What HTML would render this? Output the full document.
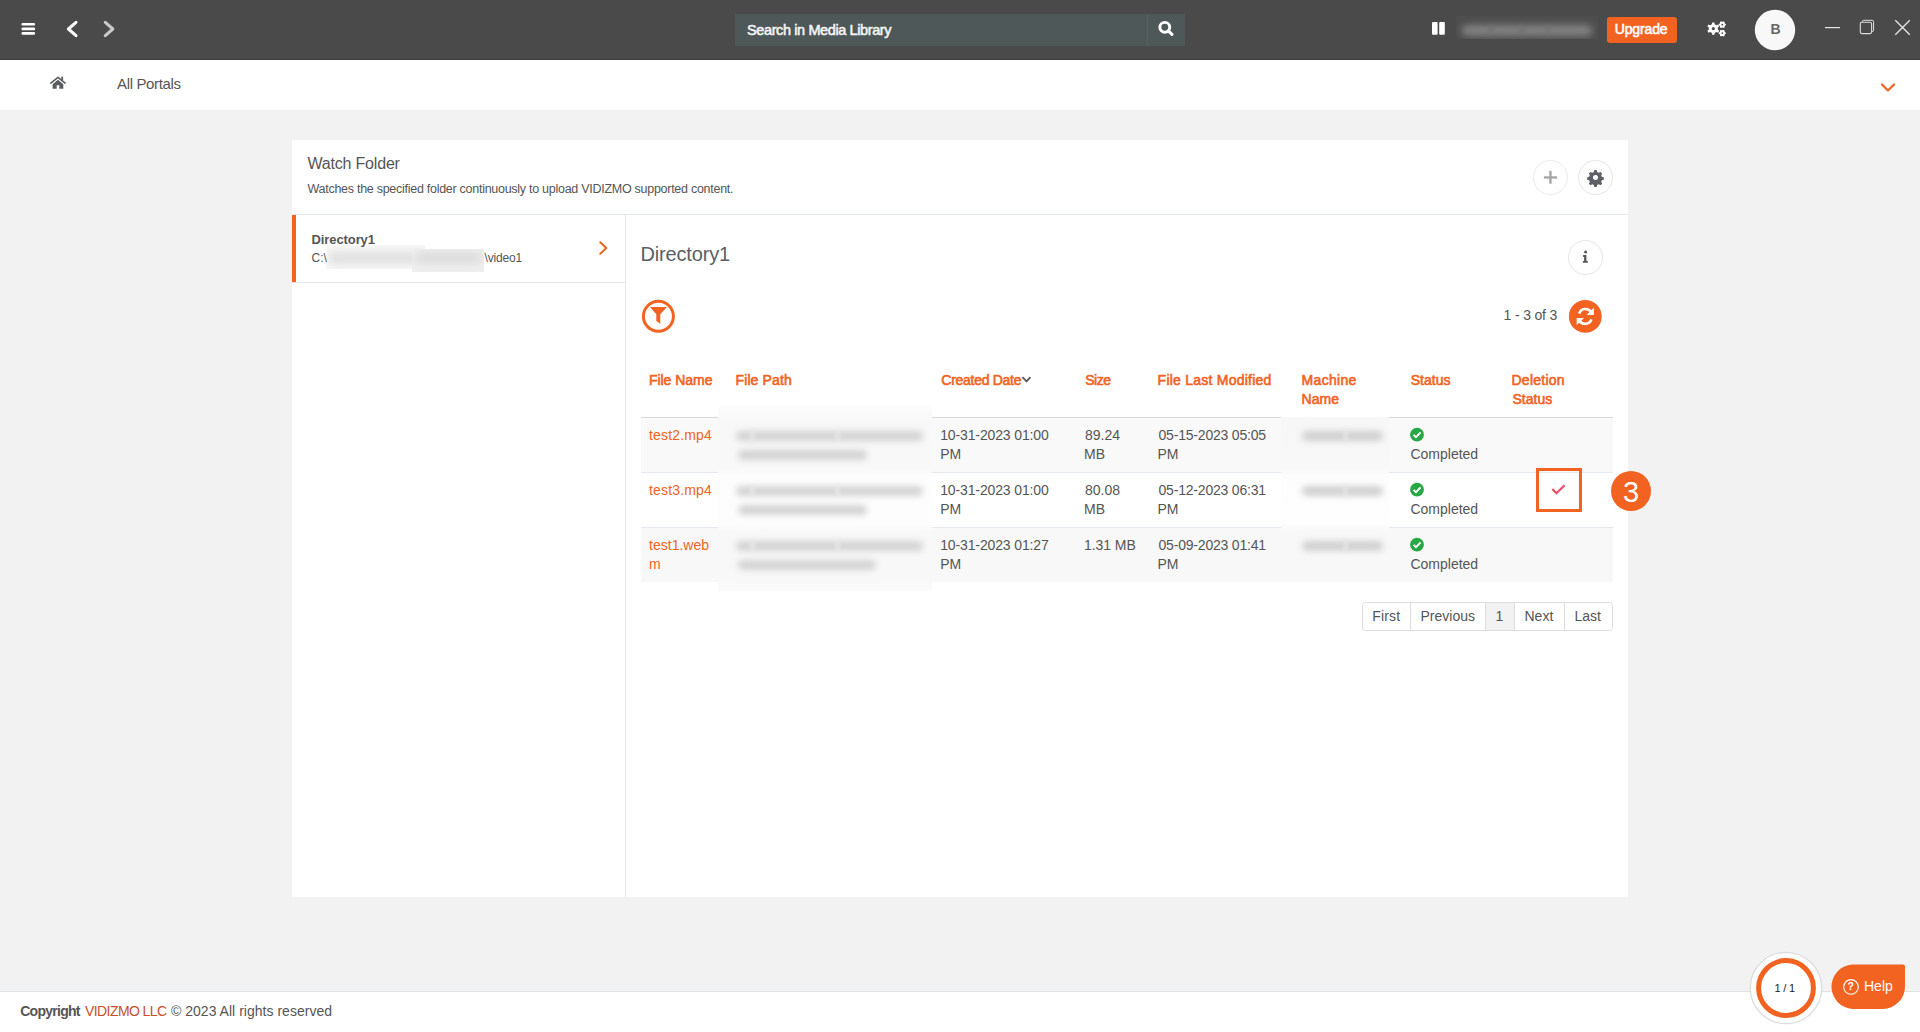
<!DOCTYPE html>
<html><head><meta charset="utf-8"><title>Watch Folder</title>
<style>
html,body{margin:0;padding:0;}
body{width:1920px;height:1032px;overflow:hidden;background:#f2f2f2;position:relative;font-family:"Liberation Sans",sans-serif;}
.a{position:absolute;box-sizing:border-box;}
.t{position:absolute;z-index:5;white-space:pre;font-family:"Liberation Sans",sans-serif;}
svg{position:absolute;overflow:visible;}
.blur{position:absolute;filter:blur(3px);}
</style></head><body>

<!-- top bar -->
<div class="a" style="left:0;top:0;width:1920px;height:60px;background:#4a4a4a;box-shadow:inset 0 -1px 0 #3c3c3c;z-index:2"></div>
<svg style="left:0;top:0;z-index:3" width="1920" height="60">
  <!-- hamburger -->
  <g fill="#ffffff">
    <rect x="21.5" y="22.9" width="13.6" height="2.6" rx="1.2"/>
    <rect x="21.5" y="27.6" width="13.6" height="2.6" rx="1.2"/>
    <rect x="21.5" y="32.1" width="13.6" height="2.6" rx="1.2"/>
  </g>
  <polyline points="76,22.3 68.4,29 76,35.7" fill="none" stroke="#ffffff" stroke-width="3" stroke-linecap="round" stroke-linejoin="round"/>
  <polyline points="105.3,22.3 112.9,29 105.3,35.7" fill="none" stroke="#c9c9c9" stroke-width="3" stroke-linecap="round" stroke-linejoin="round"/>
  <!-- search -->
  <rect x="735" y="14" width="450" height="32" fill="#4f5858"/>
  <rect x="1147" y="14" width="1" height="32" fill="#566161"/>
  <circle cx="1164.8" cy="27.3" r="4.9" fill="none" stroke="#ffffff" stroke-width="2.9"/>
  <line x1="1168.4" y1="30.9" x2="1172" y2="34.4" stroke="#ffffff" stroke-width="3" stroke-linecap="round"/>
  <!-- pause -->
  <rect x="1432" y="22" width="5.6" height="12.8" rx="1" fill="#ffffff"/>
  <rect x="1439.2" y="22" width="5.6" height="12.8" rx="1" fill="#ffffff"/>
  <!-- upgrade -->
  <rect x="1607" y="17" width="70" height="26" rx="3" fill="#f26322"/>
  <!-- gears -->
  <path d="M1711.92,24.21 L1712.18,22.40 L1714.42,22.40 L1714.68,24.21 L1716.41,25.21 L1718.11,24.53 L1719.23,26.47 L1717.79,27.60 L1717.79,29.60 L1719.23,30.73 L1718.11,32.67 L1716.41,31.99 L1714.68,32.99 L1714.42,34.80 L1712.18,34.80 L1711.92,32.99 L1710.19,31.99 L1708.49,32.67 L1707.37,30.73 L1708.81,29.60 L1708.81,27.60 L1707.37,26.47 L1708.49,24.53 L1710.19,25.21 Z M1714.90,28.60 A1.6,1.6 0 1 0 1711.70,28.60 A1.6,1.6 0 1 0 1714.90,28.60 Z" fill="#ffffff" fill-rule="evenodd"/>
  <path d="M1725.05,23.79 L1725.83,24.01 L1725.83,25.39 L1725.05,25.61 L1724.47,26.63 L1724.67,27.41 L1723.47,28.11 L1722.89,27.54 L1721.71,27.54 L1721.13,28.11 L1719.93,27.41 L1720.13,26.63 L1719.55,25.61 L1718.77,25.39 L1718.77,24.01 L1719.55,23.79 L1720.13,22.77 L1719.93,21.99 L1721.13,21.29 L1721.71,21.86 L1722.89,21.86 L1723.47,21.29 L1724.67,21.99 L1724.47,22.77 Z M1723.20,24.70 A0.9,0.9 0 1 0 1721.40,24.70 A0.9,0.9 0 1 0 1723.20,24.70 Z" fill="#ffffff" fill-rule="evenodd"/>
  <path d="M1725.05,32.19 L1725.83,32.41 L1725.83,33.79 L1725.05,34.01 L1724.47,35.03 L1724.67,35.81 L1723.47,36.51 L1722.89,35.94 L1721.71,35.94 L1721.13,36.51 L1719.93,35.81 L1720.13,35.03 L1719.55,34.01 L1718.77,33.79 L1718.77,32.41 L1719.55,32.19 L1720.13,31.17 L1719.93,30.39 L1721.13,29.69 L1721.71,30.26 L1722.89,30.26 L1723.47,29.69 L1724.67,30.39 L1724.47,31.17 Z M1723.20,33.10 A0.9,0.9 0 1 0 1721.40,33.10 A0.9,0.9 0 1 0 1723.20,33.10 Z" fill="#ffffff" fill-rule="evenodd"/>
  <!-- avatar -->
  <circle cx="1775" cy="30" r="20.2" fill="#f8f8f8"/>
  <!-- window controls -->
  <rect x="1825" y="27" width="15" height="1.2" fill="#e6e6e6"/>
  <rect x="1862.3" y="20.3" width="11.3" height="11.3" rx="1.5" fill="none" stroke="#dcdcdc" stroke-width="1"/>
  <rect x="1860.3" y="22.3" width="11.3" height="11.3" rx="1.5" fill="#4a4a4a" stroke="#dcdcdc" stroke-width="1.1"/>
  <line x1="1895.3" y1="20.3" x2="1909.8" y2="34.8" stroke="#e6e6e6" stroke-width="1.3"/>
  <line x1="1909.8" y1="20.3" x2="1895.3" y2="34.8" stroke="#e6e6e6" stroke-width="1.3"/>
</svg>
<!-- blurred account text -->
<div class="a" style="left:1456px;top:16px;width:142px;height:23px;background:#4e4e4e;z-index:3;overflow:hidden">
  <div class="blur" style="left:6px;top:8.5px;width:130px;height:11px;background:#828282;border-radius:5px;filter:blur(3.5px)"></div>
  <div class="blur" style="left:33px;top:9px;width:4px;height:10px;background:#6e6e6e;filter:blur(2.5px)"></div>
  <div class="blur" style="left:64px;top:9px;width:4px;height:10px;background:#6e6e6e;filter:blur(2.5px)"></div>
  <div class="blur" style="left:90px;top:9px;width:4px;height:10px;background:#6e6e6e;filter:blur(2.5px)"></div>
</div>
<!-- breadcrumb -->
<div class="a" style="left:0;top:60px;width:1920px;height:50px;background:#ffffff;z-index:1"></div>
<svg style="left:0;top:60px;z-index:2" width="1920" height="50">
  <polyline points="50.8,23.1 58,17.3 65.1,23.1" fill="none" stroke="#5a5c60" stroke-width="1.6" stroke-linecap="round" stroke-linejoin="round"/>
  <rect x="61.3" y="16.6" width="1.8" height="4.2" fill="#5a5c60"/>
  <path d="M52.6,24.2 L58,19.8 L63.3,24.2 V28.8 H59.3 V25.2 H56.7 V28.8 H52.6 Z" fill="#5a5c60"/>
  <polyline points="1882,24.5 1888,30.5 1894,24.5" fill="none" stroke="#f26322" stroke-width="2.2" stroke-linecap="round" stroke-linejoin="round"/>
</svg>

<!-- card -->
<div class="a" style="left:292px;top:140px;width:1336px;height:757px;background:#ffffff"></div>
<div class="a" style="left:292px;top:214px;width:1336px;height:1px;background:#e3e7ea"></div>
<div class="a" style="left:625px;top:214px;width:1px;height:683px;background:#e3e7ea"></div>
<!-- left item -->
<div class="a" style="left:292px;top:215px;width:4px;height:67px;background:#f26322"></div>
<div class="a" style="left:292px;top:282px;width:333px;height:1px;background:#e3e7ea"></div>
<div class="a" style="left:326px;top:245px;width:99px;height:24px;background:#f7f7f7;overflow:hidden">
  <div class="blur" style="left:2px;top:7px;width:100px;height:12px;background:#dfdfdf;border-radius:6px;filter:blur(4.5px)"></div>
</div>
<div class="a" style="left:412px;top:249px;width:72px;height:23px;background:#efefef;overflow:hidden">
  <div class="blur" style="left:2px;top:3px;width:68px;height:12px;background:#dcdcdc;border-radius:6px;filter:blur(4.5px)"></div>
</div>
<svg style="left:0;top:0" width="1920" height="1032">
  <polyline points="600.3,242.3 606.3,248 600.3,253.7" fill="none" stroke="#f26322" stroke-width="2" stroke-linecap="round" stroke-linejoin="round"/>
  <!-- plus / gear / info circles -->
  <circle cx="1550.4" cy="177.5" r="17" fill="#ffffff" stroke="#e8eaec" stroke-width="1"/>
  <rect x="1543.9" y="176.3" width="13.2" height="2.3" fill="#a3a3a3"/>
  <rect x="1549.3" y="170.9" width="2.3" height="12.8" fill="#a3a3a3"/>
  <circle cx="1595.5" cy="177.5" r="17" fill="#ffffff" stroke="#e3e5e8" stroke-width="1"/>
  <path d="M1594.3,170 h2.4 l0.5,2 l1.5,0.8 l1.9,-0.9 l1.5,1.5 l-0.9,1.9 l0.7,1.5 l2,0.6 v2.3 l-2,0.6 l-0.7,1.5 l0.9,1.9 l-1.5,1.5 l-1.9,-0.9 l-1.5,0.8 l-0.5,2 h-2.4 l-0.5,-2 l-1.5,-0.8 l-1.9,0.9 l-1.5,-1.5 l0.9,-1.9 l-0.7,-1.5 l-2,-0.6 v-2.3 l2,-0.6 l0.7,-1.5 l-0.9,-1.9 l1.5,-1.5 l1.9,0.9 l1.5,-0.8 z M1595.5,174.9 a2.6,2.6 0 1 0 0.01,0 z" fill="#5f6166" fill-rule="evenodd"/>
  <circle cx="1585.5" cy="257.5" r="17" fill="#ffffff" stroke="#e3e5e8" stroke-width="1"/>
  <circle cx="1585.6" cy="252.1" r="1.5" fill="#555"/>
  <path d="M1583.1,255 h3.3 v6 h1.4 v1.8 h-4.9 v-1.8 h1.2 v-4.1 h-1 z" fill="#555"/>
  <!-- filter -->
  <circle cx="658.4" cy="316.3" r="15" fill="none" stroke="#f26322" stroke-width="3"/>
  <path d="M650,307 H667 L660.3,314.3 V323.8 L656.3,321 V314.3 Z" fill="#f26322"/>
  <!-- refresh -->
  <circle cx="1585.3" cy="316.4" r="16.4" fill="#f26322"/>
  <g fill="none" stroke="#ffffff" stroke-width="2.6">
    <path d="M1579.2,313.5 A6.6,6.6 0 0 1 1591.2,312.3"/>
    <path d="M1591.4,319.3 A6.6,6.6 0 0 1 1579.4,320.5"/>
  </g>
  <path d="M1593.9,307.6 V314.9 H1586.6 Z" fill="#ffffff"/>
  <path d="M1576.7,325.2 V317.9 H1584 Z" fill="#ffffff"/>
</svg>

<!-- table -->
<div class="a" style="left:641px;top:418px;width:972px;height:54px;background:#f9f9f9"></div>
<div class="a" style="left:641px;top:473px;width:972px;height:54px;background:#ffffff"></div>
<div class="a" style="left:641px;top:528px;width:972px;height:54px;background:#f8f8f8"></div>
<div class="a" style="left:641px;top:417px;width:972px;height:1px;background:#d9d9d9"></div>
<div class="a" style="left:641px;top:472px;width:972px;height:1px;background:#e4e8eb"></div>
<div class="a" style="left:641px;top:527px;width:972px;height:1px;background:#e4e8eb"></div>

<!-- blurred file path column -->
<div class="a" style="left:718px;top:406px;width:214px;height:185px;overflow:hidden;background:linear-gradient(#fcfcfc 0px,#f9f9f9 11px,#f8f8f8 14px,#f8f8f8 62px,#fdfdfd 70px,#fdfdfd 118px,#f8f8f8 126px,#f8f8f8 174px,#fbfbfb 185px)">
  <div class="blur" style="left:18px;top:25px;width:187px;height:10px;background:#d3d3d3;border-radius:5px;filter:blur(3px)"></div>
  <div class="blur" style="left:20px;top:43.5px;width:129px;height:10px;background:#d3d3d3;border-radius:5px;filter:blur(3px)"></div>
  <div class="blur" style="left:33px;top:25px;width:3px;height:10px;background:#eeeeee;filter:blur(2px)"></div>
  <div class="blur" style="left:118px;top:25px;width:3px;height:10px;background:#eeeeee;filter:blur(2px)"></div>
  <div class="blur" style="left:18px;top:80px;width:187px;height:10px;background:#d3d3d3;border-radius:5px;filter:blur(3px)"></div>
  <div class="blur" style="left:20px;top:98.5px;width:129px;height:10px;background:#d3d3d3;border-radius:5px;filter:blur(3px)"></div>
  <div class="blur" style="left:33px;top:80px;width:3px;height:10px;background:#eeeeee;filter:blur(2px)"></div>
  <div class="blur" style="left:118px;top:80px;width:3px;height:10px;background:#eeeeee;filter:blur(2px)"></div>
  <div class="blur" style="left:18px;top:135px;width:187px;height:10px;background:#d3d3d3;border-radius:5px;filter:blur(3px)"></div>
  <div class="blur" style="left:20px;top:153.5px;width:138px;height:10px;background:#d3d3d3;border-radius:5px;filter:blur(3px)"></div>
  <div class="blur" style="left:33px;top:135px;width:3px;height:10px;background:#eeeeee;filter:blur(2px)"></div>
  <div class="blur" style="left:118px;top:135px;width:3px;height:10px;background:#eeeeee;filter:blur(2px)"></div>
</div>
<!-- blurred machine name column -->
<div class="a" style="left:1281px;top:417px;width:108px;height:165px;overflow:hidden;background:linear-gradient(#f7f7f7 0px,#f8f8f8 51px,#fdfdfd 59px,#fefefe 106px,#f8f8f8 114px,#f8f8f8 165px)">
  <div class="blur" style="left:21px;top:13.5px;width:81px;height:10px;background:#d0d0d0;border-radius:5px;filter:blur(3px)"></div>
  <div class="blur" style="left:63px;top:13.5px;width:3px;height:10px;background:#ebebeb;filter:blur(2px)"></div>
  <div class="blur" style="left:21px;top:68.5px;width:81px;height:10px;background:#d0d0d0;border-radius:5px;filter:blur(3px)"></div>
  <div class="blur" style="left:63px;top:68.5px;width:3px;height:10px;background:#ebebeb;filter:blur(2px)"></div>
  <div class="blur" style="left:21px;top:123.5px;width:81px;height:10px;background:#d0d0d0;border-radius:5px;filter:blur(3px)"></div>
  <div class="blur" style="left:63px;top:123.5px;width:3px;height:10px;background:#ebebeb;filter:blur(2px)"></div>
</div>
<svg style="left:0;top:0" width="1920" height="1032">
  <!-- sort chevron -->
  <polyline points="1023,377.6 1026.5,381.3 1030,377.6" fill="none" stroke="#555" stroke-width="1.8" stroke-linecap="round" stroke-linejoin="round"/>
  <!-- status icons -->
  <g id="ok">
    <circle cx="1417" cy="434.7" r="6.9" fill="#28a745"/>
    <polyline points="1413.6,434.8 1416,437.2 1420.6,432.4" fill="none" stroke="#ffffff" stroke-width="1.9"/>
  </g>
  <use href="#ok" y="55"/>
  <use href="#ok" y="110"/>
  <!-- highlight box -->
  <rect x="1537.5" y="469.5" width="43" height="41" fill="none" stroke="#f26322" stroke-width="3"/>
  <polyline points="1552.3,489 1556.4,493.2 1564.6,485.2" fill="none" stroke="#e8506a" stroke-width="2.2"/>
  <circle cx="1631" cy="491" r="20" fill="#f26322"/>
  <!-- pagination -->
  <rect x="1362.5" y="602.5" width="250" height="28" rx="3" fill="#ffffff" stroke="#dddddd"/>
  <rect x="1485.5" y="603" width="29" height="27" fill="#f2f2f2"/>
  <rect x="1410" y="603" width="1" height="27" fill="#dddddd"/>
  <rect x="1485" y="603" width="1" height="27" fill="#dddddd"/>
  <rect x="1514" y="603" width="1" height="27" fill="#dddddd"/>
  <rect x="1564" y="603" width="1" height="27" fill="#dddddd"/>
</svg>

<!-- footer -->
<div class="a" style="left:0;top:991px;width:1920px;height:41px;background:#ffffff;border-top:1px solid #e0e4e6"></div>
<svg style="left:0;top:0" width="1920" height="1032">
  <circle cx="1786" cy="988" r="35.7" fill="#ffffff" stroke="#d9dcde" stroke-width="1.2"/>
  <circle cx="1786" cy="988" r="27.4" fill="none" stroke="#f26322" stroke-width="5"/>
  <path d="M1852,964.4 H1903 Q1905,964.4 1905,966.4 V986.6 A22.3,22.3 0 0 1 1882.7,1008.9 H1852.3 A22.3,22.3 0 0 1 1852.3,964.4 Z" fill="#f26322"/>
  <circle cx="1851" cy="986.9" r="7.3" fill="none" stroke="#ffffff" stroke-width="1.1"/>
</svg>
<span class="t" style="left:1847.6px;top:981px;font-size:10.5px;line-height:10.5px;font-weight:bold;color:#fff">?</span>

<span class="t" style="left:747.00px;top:22.75px;font-size:14.5px;line-height:14.5px;font-weight:normal;color:#f4f4f4;letter-spacing:-0.390px;-webkit-text-stroke:0.55px #f4f4f4">Search in Media Library</span>
<span class="t" style="left:1614.70px;top:22.20px;font-size:14px;line-height:14px;font-weight:normal;color:#ffffff;letter-spacing:-0.136px;-webkit-text-stroke:0.55px #ffffff">Upgrade</span>
<span class="t" style="left:1770.50px;top:22.00px;font-size:14px;line-height:14px;font-weight:bold;color:#666666;letter-spacing:0.000px;">B</span>
<span class="t" style="left:117.00px;top:75.70px;font-size:15px;line-height:15px;font-weight:normal;color:#555555;letter-spacing:-0.352px;">All Portals</span>
<span class="t" style="left:307.50px;top:156.00px;font-size:16px;line-height:16px;font-weight:normal;color:#555555;letter-spacing:-0.193px;">Watch Folder</span>
<span class="t" style="left:307.50px;top:182.65px;font-size:12.5px;line-height:12.5px;font-weight:normal;color:#555555;letter-spacing:-0.273px;">Watches the specified folder continuously to upload VIDIZMO supported content.</span>
<span class="t" style="left:311.50px;top:232.75px;font-size:13px;line-height:13px;font-weight:bold;color:#555555;letter-spacing:-0.092px;">Directory1</span>
<span class="t" style="left:311.50px;top:251.90px;font-size:12px;line-height:12px;font-weight:normal;color:#555555;letter-spacing:0.000px;">C:\</span>
<span class="t" style="left:484.50px;top:251.90px;font-size:12px;line-height:12px;font-weight:normal;color:#555555;letter-spacing:-0.170px;">\video1</span>
<span class="t" style="left:640.50px;top:243.90px;font-size:20px;line-height:20px;font-weight:normal;color:#5a5f66;letter-spacing:-0.168px;">Directory1</span>
<span class="t" style="left:1503.60px;top:308.00px;font-size:14px;line-height:14px;font-weight:normal;color:#555555;letter-spacing:-0.174px;">1 - 3 of 3</span>
<span class="t" style="left:648.90px;top:372.90px;font-size:14px;line-height:14px;font-weight:normal;color:#f26322;letter-spacing:-0.026px;-webkit-text-stroke:0.6px #f26322">File Name</span>
<span class="t" style="left:735.50px;top:372.90px;font-size:14px;line-height:14px;font-weight:normal;color:#f26322;letter-spacing:0.117px;-webkit-text-stroke:0.6px #f26322">File Path</span>
<span class="t" style="left:941.30px;top:372.90px;font-size:14px;line-height:14px;font-weight:normal;color:#f26322;letter-spacing:-0.280px;-webkit-text-stroke:0.6px #f26322">Created Date</span>
<span class="t" style="left:1085.20px;top:372.90px;font-size:14px;line-height:14px;font-weight:normal;color:#f26322;letter-spacing:-0.483px;-webkit-text-stroke:0.6px #f26322">Size</span>
<span class="t" style="left:1157.60px;top:372.90px;font-size:14px;line-height:14px;font-weight:normal;color:#f26322;letter-spacing:0.239px;-webkit-text-stroke:0.6px #f26322">File Last Modified</span>
<span class="t" style="left:1301.60px;top:372.90px;font-size:14px;line-height:14px;font-weight:normal;color:#f26322;letter-spacing:0.312px;-webkit-text-stroke:0.6px #f26322">Machine</span>
<span class="t" style="left:1301.60px;top:391.70px;font-size:14px;line-height:14px;font-weight:normal;color:#f26322;letter-spacing:0.000px;-webkit-text-stroke:0.6px #f26322">Name</span>
<span class="t" style="left:1410.70px;top:372.90px;font-size:14px;line-height:14px;font-weight:normal;color:#f26322;letter-spacing:0.022px;-webkit-text-stroke:0.6px #f26322">Status</span>
<span class="t" style="left:1511.50px;top:372.90px;font-size:14px;line-height:14px;font-weight:normal;color:#f26322;letter-spacing:0.246px;-webkit-text-stroke:0.6px #f26322">Deletion</span>
<span class="t" style="left:1512.50px;top:391.70px;font-size:14px;line-height:14px;font-weight:normal;color:#f26322;letter-spacing:0.022px;-webkit-text-stroke:0.6px #f26322">Status</span>
<span class="t" style="left:649.10px;top:427.80px;font-size:14px;line-height:14px;font-weight:normal;color:#f26322;letter-spacing:0.139px;">test2.mp4</span>
<span class="t" style="left:940.20px;top:427.80px;font-size:14px;line-height:14px;font-weight:normal;color:#555555;letter-spacing:-0.130px;">10-31-2023 01:00</span>
<span class="t" style="left:940.20px;top:446.60px;font-size:14px;line-height:14px;font-weight:normal;color:#555555;letter-spacing:0.000px;">PM</span>
<span class="t" style="left:1085.00px;top:427.80px;font-size:14px;line-height:14px;font-weight:normal;color:#555555;letter-spacing:0.000px;">89.24</span>
<span class="t" style="left:1084.00px;top:446.60px;font-size:14px;line-height:14px;font-weight:normal;color:#555555;letter-spacing:0.000px;">MB</span>
<span class="t" style="left:1158.50px;top:427.80px;font-size:14px;line-height:14px;font-weight:normal;color:#555555;letter-spacing:-0.197px;">05-15-2023 05:05</span>
<span class="t" style="left:1157.50px;top:446.60px;font-size:14px;line-height:14px;font-weight:normal;color:#555555;letter-spacing:0.000px;">PM</span>
<span class="t" style="left:1410.50px;top:446.60px;font-size:14px;line-height:14px;font-weight:normal;color:#555555;letter-spacing:-0.015px;">Completed</span>
<span class="t" style="left:649.10px;top:482.80px;font-size:14px;line-height:14px;font-weight:normal;color:#f26322;letter-spacing:0.139px;">test3.mp4</span>
<span class="t" style="left:940.20px;top:482.80px;font-size:14px;line-height:14px;font-weight:normal;color:#555555;letter-spacing:-0.130px;">10-31-2023 01:00</span>
<span class="t" style="left:940.20px;top:501.60px;font-size:14px;line-height:14px;font-weight:normal;color:#555555;letter-spacing:0.000px;">PM</span>
<span class="t" style="left:1085.00px;top:482.80px;font-size:14px;line-height:14px;font-weight:normal;color:#555555;letter-spacing:0.000px;">80.08</span>
<span class="t" style="left:1084.00px;top:501.60px;font-size:14px;line-height:14px;font-weight:normal;color:#555555;letter-spacing:0.000px;">MB</span>
<span class="t" style="left:1158.50px;top:482.80px;font-size:14px;line-height:14px;font-weight:normal;color:#555555;letter-spacing:-0.197px;">05-12-2023 06:31</span>
<span class="t" style="left:1157.50px;top:501.60px;font-size:14px;line-height:14px;font-weight:normal;color:#555555;letter-spacing:0.000px;">PM</span>
<span class="t" style="left:1410.50px;top:501.60px;font-size:14px;line-height:14px;font-weight:normal;color:#555555;letter-spacing:-0.015px;">Completed</span>
<span class="t" style="left:649.10px;top:537.80px;font-size:14px;line-height:14px;font-weight:normal;color:#f26322;letter-spacing:0.000px;">test1.web</span>
<span class="t" style="left:649.10px;top:556.60px;font-size:14px;line-height:14px;font-weight:normal;color:#f26322;letter-spacing:0.000px;">m</span>
<span class="t" style="left:940.20px;top:537.80px;font-size:14px;line-height:14px;font-weight:normal;color:#555555;letter-spacing:-0.130px;">10-31-2023 01:27</span>
<span class="t" style="left:940.20px;top:556.60px;font-size:14px;line-height:14px;font-weight:normal;color:#555555;letter-spacing:0.000px;">PM</span>
<span class="t" style="left:1084.00px;top:537.80px;font-size:14px;line-height:14px;font-weight:normal;color:#555555;letter-spacing:-0.067px;">1.31 MB</span>
<span class="t" style="left:1158.50px;top:537.80px;font-size:14px;line-height:14px;font-weight:normal;color:#555555;letter-spacing:-0.197px;">05-09-2023 01:41</span>
<span class="t" style="left:1157.50px;top:556.60px;font-size:14px;line-height:14px;font-weight:normal;color:#555555;letter-spacing:0.000px;">PM</span>
<span class="t" style="left:1410.50px;top:556.60px;font-size:14px;line-height:14px;font-weight:normal;color:#555555;letter-spacing:-0.015px;">Completed</span>
<span class="t" style="left:1372.30px;top:608.90px;font-size:14px;line-height:14px;font-weight:normal;color:#555555;letter-spacing:0.144px;">First</span>
<span class="t" style="left:1420.50px;top:608.90px;font-size:14px;line-height:14px;font-weight:normal;color:#555555;letter-spacing:0.000px;">Previous</span>
<span class="t" style="left:1495.50px;top:608.90px;font-size:14px;line-height:14px;font-weight:normal;color:#555555;letter-spacing:0.000px;">1</span>
<span class="t" style="left:1524.50px;top:608.90px;font-size:14px;line-height:14px;font-weight:normal;color:#555555;letter-spacing:0.000px;">Next</span>
<span class="t" style="left:1574.50px;top:608.90px;font-size:14px;line-height:14px;font-weight:normal;color:#555555;letter-spacing:0.000px;">Last</span>
<span class="t" style="left:20.25px;top:1004.25px;font-size:14px;line-height:14px;font-weight:bold;color:#555555;letter-spacing:-0.743px;">Copyright</span>
<span class="t" style="left:85.00px;top:1004.25px;font-size:14px;line-height:14px;font-weight:normal;color:#c9502a;letter-spacing:-0.579px;">VIDIZMO LLC</span>
<span class="t" style="left:171.00px;top:1004.25px;font-size:14px;line-height:14px;font-weight:normal;color:#555555;letter-spacing:0.020px;">© 2023 All rights reserved</span>
<span class="t" style="left:1774.50px;top:983.10px;font-size:11px;line-height:11px;font-weight:normal;color:#222222;letter-spacing:-0.172px;">1 / 1</span>
<span class="t" style="left:1864.00px;top:978.70px;font-size:14px;line-height:14px;font-weight:normal;color:#ffffff;letter-spacing:-0.002px;">Help</span>
<span class="t" style="left:1623.00px;top:477.80px;font-size:29px;line-height:29px;font-weight:normal;color:#ffffff;letter-spacing:0.000px;">3</span>
</body></html>
